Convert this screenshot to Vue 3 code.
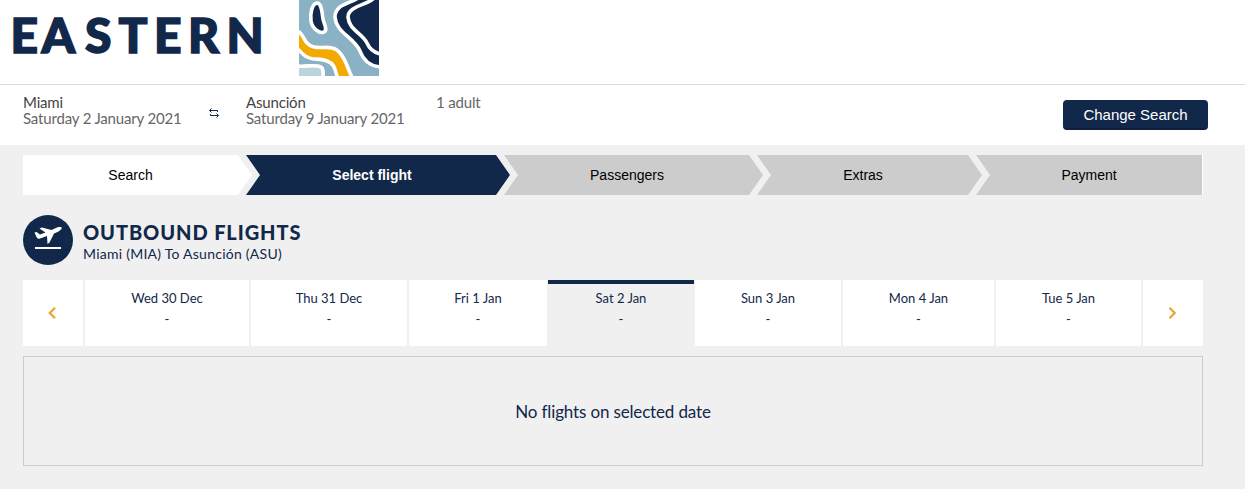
<template>
  <div class="page">
    <header class="header">
      <svg class="header__logo" width="380" height="76" viewBox="0 0 380 76" role="img" aria-label="Eastern">
        <text class="header__wordmark" x="10.500 41.500 85 118.500 154 188 226.500" y="53">EASTERN</text>
        <svg x="299" y="-4" width="80" height="80" viewBox="0 0 80 80">
          <rect width="80" height="80" fill="#8ab1c4" />
          <path d="M64 -2C56 8 36 6 36 21C37 37 55 41 61 55C65 66 72 71 84 71V-2Z" fill="#12284a" stroke="#fff" stroke-width="3.600" />
          <path d="M75 2C69 9 49 10 49 21C50 34 63 37 68 47C71 54 76 57 82 58" fill="none" stroke="#fff" stroke-width="3.600" />
          <path d="M18 7C13 8 11 17 12 25C13 32 20 38 25 36C29 34 25 28 24 23C23 18 23 7 18 7Z" fill="#12284a" stroke="#fff" stroke-width="3.600" />
          <path d="M-2 35C5 36 4 49 15 51C24 53 34 48 41 57C48 65 49 75 54 83H39C36 76 37 68 28 65C19 61 13 66 5 59C0 55 1 54 -2 53Z" fill="#f2aa00" stroke="#fff" stroke-width="3.600" />
          <path d="M-2 70C7 71 16 68 22 71C25 73 24 77 24 84H-2Z" fill="#bdd4df" stroke="#fff" stroke-width="3.600" />
        </svg>
      </svg>
    </header>

    <section class="summary">
      <div class="summary__place">
        <div class="summary__city">Miami</div>
        <div class="summary__date">Saturday 2 January 2021</div>
      </div>
      <svg class="summary__swap" width="10" height="10" viewBox="0 0 10 10" fill="none" stroke="#12284a" stroke-width="1" aria-hidden="true">
        <path d="M2.500 .5L.5 2.500L2.500 4.500M.5 2.500H8.500V4M7.500 5.500L9.500 7.500L7.500 9.500M9.500 7.500H1.500V6" />
      </svg>
      <div class="summary__place summary__place--to">
        <div class="summary__city">Asunción</div>
        <div class="summary__date">Saturday 9 January 2021</div>
      </div>
      <div class="summary__guests">1 adult</div>
      <button class="summary__button">Change Search</button>
    </section>

    <main class="content">
      <nav class="steps">
        <div
          v-for="s in steps"
          :key="s.id"
          :class="['steps__item', 'steps__item--' + s.id]"
        >{{ s.label }}</div>
      </nav>

      <div class="route">
        <svg class="route__icon" width="50" height="50" viewBox="0 0 50 50" aria-hidden="true">
          <circle cx="25" cy="25" r="25" fill="#12284a" />
          <path d="M11.500 17.500L13.500 17L17 19.500L22.500 17.500L16.500 13.500L19 12.500L28.500 15L34 12.500C37 11.700 38.500 12 38.800 12.700C39 14 37 15.500 34.500 17L31 18.500L26.500 27.500L24.500 29L24 21L17 23.500C15 24 14.300 23.500 13.500 22Z" fill="#fff" />
          <rect x="12" y="32" width="26" height="2" fill="#fff" />
        </svg>
        <div>
          <h1 class="route__title">OUTBOUND FLIGHTS</h1>
          <div class="route__name">Miami (MIA) To Asunción (ASU)</div>
        </div>
      </div>

      <div class="days">
        <button class="days__arrow" aria-label="Previous">
          <svg width="8" height="12" viewBox="0 0 8 12"><path d="M7 .8L1.800 6L7 11.200" /></svg>
        </button>
        <div
          v-for="d in days"
          :key="d"
          class="days__item"
          :class="{ 'days__item--active': d === selected }"
        >
          <span class="days__label">{{ d }}</span>
          <span class="days__price">-</span>
        </div>
        <button class="days__arrow" aria-label="Next">
          <svg width="8" height="12" viewBox="0 0 8 12"><path d="M1.500 .8L6.700 6L1.500 11.200" /></svg>
        </button>
      </div>

      <div class="empty"><span class="empty__text">No flights on selected date</span></div>
    </main>
  </div>
</template>

<script setup>
import { ref } from 'vue'

const steps = [
  { id: 'search', label: 'Search' },
  { id: 'select', label: 'Select flight' },
  { id: 'passengers', label: 'Passengers' },
  { id: 'extras', label: 'Extras' },
  { id: 'payment', label: 'Payment' },
]

const days = ['Wed 30 Dec', 'Thu 31 Dec', 'Fri 1 Jan', 'Sat 2 Jan', 'Sun 3 Jan', 'Mon 4 Jan', 'Tue 5 Jan']
const selected = ref('Sat 2 Jan')
</script>

<style>
body {
  background: #f0f0f0;
}
</style>

<style scoped>
.page {
  height: 489px;
  overflow: hidden;
  background: #f0f0f0;
  font-family: Lato, 'Liberation Sans', sans-serif;
  color: #12284a;
}

.page * {
  box-sizing: border-box;
}

.header {
  height: 85px;
  background: #fff;
  border-bottom: 1px solid #ddd;
}

.header__logo {
  display: block;
}

.header__wordmark {
  font-size: 48px;
  font-weight: 900;
  fill: #12284a;
  stroke: #12284a;
  stroke-width: 1.5px;
}

.summary {
  display: flex;
  height: 60px;
  padding: 9px 37px 0 23px;
  background: #fff;
  font-size: 15px;
  line-height: 16px;
  letter-spacing: -0.17px;
  color: #666;
  white-space: nowrap;
}

.summary__place {
  width: 186px;
}

.summary__place--to {
  width: 190px;
}

.summary__city {
  color: #444;
}

.summary__swap {
  margin: 14px 27px 0 0;
}

.summary__button {
  width: 145px;
  height: 30px;
  margin: 6px 0 0 auto;
  padding: 0;
  border: 0;
  border-bottom: 2px solid #0d1f3d;
  border-radius: 4px;
  background: #12284a;
  font-family: 'Liberation Sans', Arial, sans-serif;
  font-size: 15px;
  letter-spacing: 0;
  color: #fff;
}

.content {
  padding: 10px 42px 0 23px;
}

.steps {
  display: flex;
  height: 40px;
  font-family: 'Liberation Sans', Arial, sans-serif;
  font-size: 14px;
  line-height: 40px;
  text-align: center;
  color: #000;
}

.steps__item {
  flex: none;
  width: 259px;
  margin-left: -6px;
  padding-right: 13px;
  background: #ccc;
  clip-path: polygon(0 0, calc(100% - 14px) 0, 100% 50%, calc(100% - 14px) 100%, 0 100%, 14px 50%);
}

.steps__item--search {
  width: 229px;
  margin-left: 0;
  padding-right: 14px;
  background: #fff;
  clip-path: polygon(0 0, calc(100% - 14px) 0, 100% 50%, calc(100% - 14px) 100%, 0 100%);
}

.steps__item--select {
  width: 264px;
  padding-right: 12px;
  background: #12284a;
  font-weight: 700;
  color: #fff;
}

.steps__item--extras {
  width: 225px;
}

.steps__item--payment {
  width: 227px;
  padding-right: 0;
  border-right: 1px solid #fff;
  clip-path: polygon(0 0, 100% 0, 100% 100%, 0 100%, 14px 50%);
}

.route {
  display: flex;
  gap: 10px;
  height: 50px;
  margin-top: 20px;
}

.route__title {
  margin: 5px 0 0;
  font-size: 20px;
  font-weight: 900;
  line-height: 25px;
  letter-spacing: 0.9px;
}

.route__name {
  font-size: 14px;
  line-height: 18px;
  letter-spacing: 0.25px;
}

.days {
  display: grid;
  grid-template-columns: 60px 164px 156px 138px 144px 146px 151px 145px 60px;
  column-gap: 2px;
  height: 66px;
  margin-top: 15px;
  font-size: 13px;
}

.days__item {
  display: flex;
  flex-direction: column;
  align-items: center;
  padding-top: 8px;
  background: #fff;
  line-height: 20px;
}

.days__price {
  padding-top: 1px;
}

.days__item--active {
  margin: 0 -1px;
  padding-top: 4px;
  border-top: 4px solid #12284a;
  background: #f0f0f0;
}

.days__arrow {
  display: flex;
  align-items: center;
  justify-content: center;
  padding: 0 2px 0 0;
  border: 0;
  background: #fff;
}

.days__arrow path {
  fill: none;
  stroke: #e8a530;
  stroke-width: 2.3;
}

.empty {
  display: flex;
  align-items: center;
  justify-content: center;
  height: 110px;
  margin-top: 10px;
  border: 1px solid #ccc;
  font-size: 17px;
  letter-spacing: -0.15px;
}
</style>
